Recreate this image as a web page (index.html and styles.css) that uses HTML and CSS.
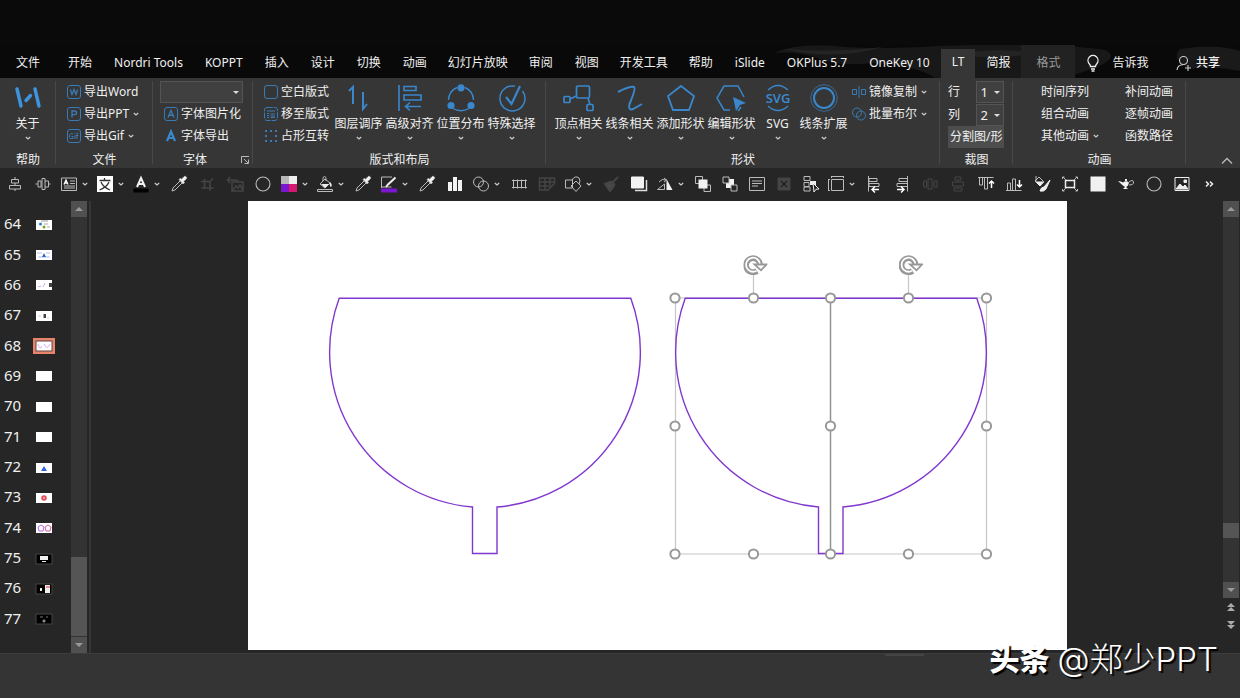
FILE: index.html
```html
<!DOCTYPE html>
<html lang="zh-CN">
<head>
<meta charset="utf-8">
<title>LT</title>
<link rel="stylesheet" href="styles.css">
</head>
<body>
<svg class="defs" aria-hidden="true">
  <symbol id="chev" viewBox="0 0 8 8"><path d="M1.8 3l2.200 2 2.200-2" fill="none" stroke="currentColor" stroke-width="1.200"/></symbol>
  <symbol id="dropper" viewBox="0 0 18 18"><path d="M10 6L3 13l-1 3 3-1 7-7" fill="none" stroke="currentColor"/><path d="M9 4.500l1.500-1 1 .8 2.500-2.600q1.500-1 2.300.3.700 1.200-.4 2.300L13.500 6.500l1 1-1.300 1.500z" fill="#f4f4f4"/></symbol>
  <symbol id="ring" viewBox="0 0 18 18"><circle cx="9" cy="9" r="7" fill="none" stroke="currentColor" stroke-width="1.100"/></symbol>
  <symbol id="rotate" viewBox="0 0 24 20"><path d="M16.500 9.500A7 7 0 1 0 13.500 16" fill="none" stroke="#989898" stroke-width="5.800"/><path d="M16.500 9.500A7 7 0 1 0 13 15.800" fill="none" stroke="#fff" stroke-width="1.800"/><path d="M11 9.500h12l-5.500 5.800z" fill="#fff" stroke="#989898" stroke-width="1.800"/></symbol>
</svg>

<div class="app">
  <header class="titlebar"></header>

  <nav class="tabs">
    <svg class="swirl" viewBox="0 0 465 33" preserveAspectRatio="none" aria-hidden="true">
      <path d="M0 8Q20 -2 60 1Q100 5 160 1Q280 -3 330 5Q345 12 322 22Q300 30 290 33H160Q140 20 100 18Q60 22 40 12Q20 6 0 8z" fill="#181818"/>
      <path d="M8 4Q60 8 108 2Q60 16 8 4zM175 9Q230 2 260 8Q220 16 175 9z" fill="#242424"/>
      <path d="M405 4Q440 -2 465 6V26Q440 20 415 24Q395 14 405 4z" fill="#1a1a1a"/>
    </svg>
    <button class="tab tab-file">文件</button>
    <button class="tab">开始</button>
    <button class="tab">Nordri Tools</button>
    <button class="tab">KOPPT</button>
    <button class="tab">插入</button>
    <button class="tab">设计</button>
    <button class="tab">切换</button>
    <button class="tab">动画</button>
    <button class="tab tight">幻灯片放映</button>
    <button class="tab">审阅</button>
    <button class="tab">视图</button>
    <button class="tab tight">开发工具</button>
    <button class="tab">帮助</button>
    <button class="tab">iSlide</button>
    <button class="tab">OKPlus 5.7</button>
    <button class="tab">OneKey 10</button>
    <button class="tab active">LT</button>
    <button class="tab">简报</button>
    <button class="tab context">格式</button>
    <button class="tab tell"><svg class="i18" viewBox="0 0 18 18"><path d="M6.500 12.500Q6.500 11 5 9.500A5 5 0 1 1 13 9.500Q11.500 11 11.500 12.500zM7 15h4M7.500 17h3" fill="none" stroke="#f0f0f0" stroke-width="1.300"/></svg>告诉我</button>
    <button class="tab share"><svg class="i18" viewBox="0 0 18 18"><circle cx="8.500" cy="6.500" r="4" fill="none" stroke="#ccc" stroke-width="1.100"/><path d="M2 16Q2.500 11 8 10.800M10 14h6M13 11v6" fill="none" stroke="#ccc" stroke-width="1.100"/></svg>共享</button>
  </nav>

  <section class="ribbon">
    <div class="group g-help">
      <div class="body">
        <button class="big"><svg viewBox="0 0 28 28"><path d="M3 5l4 17M21 5l4 17M12 16.500l4.500-5" fill="none" stroke="#3f94e0" stroke-width="3.400" stroke-linecap="round"/></svg><span>关于</span><svg class="chev"><use href="#chev"/></svg></button>
      </div>
      <h2 class="caption">帮助</h2>
    </div>

    <div class="group g-file">
      <div class="body"><div class="col">
        <button class="small"><svg class="ic" viewBox="0 0 14 14"><rect x=".5" y=".5" width="13" height="13" rx="2.500"/><path d="M3.500 4.500l1.500 5 2-5 2 5 1.500-5" stroke-width="1.300"/></svg>导出Word</button>
        <button class="small"><svg class="ic" viewBox="0 0 14 14"><rect x=".5" y=".5" width="13" height="13" rx="2.500"/><path d="M5 10.500V4h2.500q2 0 2 1.800t-2 1.800H5" stroke-width="1.400"/></svg>导出PPT<svg class="chev"><use href="#chev"/></svg></button>
        <button class="small"><svg class="ic" viewBox="0 0 14 14"><rect x=".5" y=".5" width="13" height="13" rx="2.500"/><path d="M6 5Q3 3.500 2.500 7T6 9.500V7.500H4.500M8 6v4M8 3.800v1M10 10V5q0-1.200 1.500-1M9 6.500h2.500"/></svg>导出Gif<svg class="chev"><use href="#chev"/></svg></button>
      </div></div>
      <h2 class="caption">文件</h2>
    </div>

    <div class="group g-font">
      <div class="body"><div class="col">
        <span class="combo font-combo"><select aria-label="字体"><option></option></select></span>
        <button class="small"><svg class="ic" viewBox="0 0 14 14"><rect x=".5" y=".5" width="13" height="13" rx="2.500"/><path d="M4 10.500L7 3.500l3 7M5 8.300h4" stroke-width="1.400"/></svg>字体图片化</button>
        <button class="small"><svg class="ic" viewBox="0 0 14 14"><path d="M3 12L7 2.500 11 12M4.500 9h5" stroke="#3a87cc" stroke-width="2.200"/></svg>字体导出</button>
      </div></div>
      <h2 class="caption">字体</h2>
      <button class="launch" aria-label="字体设置"><svg viewBox="0 0 9 9"><path d="M.5 7V.5H8M3 3l4 4M7.500 3.500v4h-4" fill="none" stroke="#bbb"/></svg></button>
    </div>

    <div class="group g-layout">
      <div class="body">
        <div class="col">
          <button class="small"><svg class="ic" viewBox="0 0 14 14"><rect x=".5" y=".5" width="13" height="13" rx="2.500"/></svg>空白版式</button>
          <button class="small"><svg class="ic" viewBox="0 0 14 14"><rect x=".5" y=".5" width="13" height="13" rx="2.500" stroke-dasharray="6 1"/><path d="M3 4h8M3 6.500h2M3 8.500h2M3 10.500h2M6.500 7H11M6.500 9H11M6.500 10.500H11"/></svg>移至版式</button>
          <button class="small"><svg class="ic" viewBox="0 0 14 14"><path d="M1 2h12M1 12h12" stroke-width="2" stroke-dasharray="2 3"/><path d="M2 6v2M12 6v2" stroke-width="2"/></svg>占形互转</button>
        </div>
        <button class="big"><svg viewBox="0 0 28 28"><path d="M4 7l4-4v17M18 8v17l4-5" fill="none" stroke="#3a87cc" stroke-width="2"/></svg><span>图层调序</span><svg class="chev"><use href="#chev"/></svg></button>
        <button class="big"><svg viewBox="0 0 28 28"><path d="M3 1v26M8 2.500h12v4H8zM8 11h17v5H8zM25 22.500H10M14 18.500l-4.500 4 4.500 4" fill="none" stroke="#3a87cc" stroke-width="1.600"/></svg><span>高级对齐</span><svg class="chev"><use href="#chev"/></svg></button>
        <button class="big"><svg viewBox="0 0 28 28"><path d="M18 3.500Q26 7 26.500 16M10 3.500Q2 7 1.500 16M6 24.500Q14 29 22 24.500" fill="none" stroke="#3a87cc" stroke-width="1.400"/><g fill="#3a87cc"><circle cx="14" cy="3.800" r="3.600"/><circle cx="4" cy="21.500" r="3.600"/><circle cx="24" cy="21.500" r="3.600"/></g></svg><span>位置分布</span><svg class="chev"><use href="#chev"/></svg></button>
        <button class="big"><svg viewBox="0 0 28 28"><path d="M17 2.200A12.500 12.500 0 1 0 24.500 7" fill="none" stroke="#3a87cc" stroke-width="1.500"/><path d="M8 13l5.500 7L22 2" fill="none" stroke="#3a87cc" stroke-width="2.200"/></svg><span>特殊选择</span><svg class="chev"><use href="#chev"/></svg></button>
      </div>
      <h2 class="caption">版式和布局</h2>
    </div>

    <div class="group g-shape">
      <div class="body">
        <button class="big"><svg class="wide" viewBox="0 0 32 28"><g fill="none" stroke="#3a87cc" stroke-width="1.700"><rect x="13.500" y="2" width="13" height="12" rx="1.500"/><rect x="1" y="12.500" width="6" height="6" rx="1"/><rect x="24" y="20.500" width="6" height="6" rx="1"/><path d="M7 15l6.500-3M25 14l2 6.500"/></g></svg><span>顶点相关</span><svg class="chev"><use href="#chev"/></svg></button>
        <button class="big"><svg viewBox="0 0 28 28"><path d="M2 8Q14 2 18 3Q20 5 13.500 20Q12 27 17 25L26 20" fill="none" stroke="#3a87cc" stroke-width="2"/></svg><span>线条相关</span><svg class="chev"><use href="#chev"/></svg></button>
        <button class="big"><svg viewBox="0 0 28 28"><path d="M14 2L27 12 22 26H6L1 12z" fill="none" stroke="#3a87cc" stroke-width="1.800"/></svg><span>添加形状</span><svg class="chev"><use href="#chev"/></svg></button>
        <button class="big"><svg class="wide" viewBox="0 0 32 28"><path d="M14 26H8L1 14 8 2h14l6 11M22 27l3-4" fill="none" stroke="#3a87cc" stroke-width="1.500"/><path d="M17 13l13 6-6 2-4 6z" fill="#3a87cc"/></svg><span>编辑形状</span><svg class="chev"><use href="#chev"/></svg></button>
        <button class="big narrow"><svg viewBox="0 0 28 28"><path d="M4 6Q14 -3 24 6M4 22Q14 31 24 22" fill="none" stroke="#3a87cc" stroke-width="1.400"/><text x="14" y="18.500" text-anchor="middle" class="svgtext">SVG</text></svg><span>SVG</span><svg class="chev"><use href="#chev"/></svg></button>
        <button class="big"><svg viewBox="0 0 28 28"><circle cx="14" cy="14" r="13.300" fill="none" stroke="#3a6a96"/><circle cx="14" cy="14" r="10" fill="none" stroke="#3a87cc" stroke-width="2"/></svg><span>线条扩展</span><svg class="chev"><use href="#chev"/></svg></button>
        <div class="col">
          <button class="small"><svg class="ic" viewBox="0 0 14 14"><path d="M.5 4.500h4v5h-4zM9.500 4.500h4v5h-4zM7 1v12"/></svg>镜像复制<svg class="chev"><use href="#chev"/></svg></button>
          <button class="small"><svg class="ic" viewBox="0 0 14 14"><circle cx="5" cy="5.500" r="4.500"/><circle cx="9" cy="8.500" r="4.500"/></svg>批量布尔<svg class="chev"><use href="#chev"/></svg></button>
        </div>
      </div>
      <h2 class="caption">形状</h2>
    </div>

    <div class="group g-crop">
      <div class="body"><div class="col">
        <div class="field"><label for="rows">行</label><span class="combo"><select id="rows"><option>1</option></select></span></div>
        <div class="field"><label for="cols">列</label><span class="combo"><select id="cols"><option>2</option></select></span></div>
        <button class="split">分割图/形</button>
      </div></div>
      <h2 class="caption">裁图</h2>
    </div>

    <div class="group g-anim">
      <div class="body">
        <div class="col">
          <button class="small">时间序列</button>
          <button class="small">组合动画</button>
          <button class="small">其他动画<svg class="chev"><use href="#chev"/></svg></button>
        </div>
        <div class="col">
          <button class="small">补间动画</button>
          <button class="small">逐帧动画</button>
          <button class="small">函数路径</button>
        </div>
      </div>
      <h2 class="caption">动画</h2>
    </div>
    <button class="collapse" aria-label="折叠功能区"><svg viewBox="0 0 12 8"><path d="M1 6.500l5-5 5 5" fill="none" stroke="#bbb" stroke-width="1.300"/></svg></button>
  </section>

  <section class="quick">
    <button class="q" aria-label="水平居中"><svg viewBox="0 0 18 18"><path d="M9 2v2M9 8v2M9 14v2M5.500 4.500h7v3.500h-7zM3.500 10.500h11v3.500h-11z"/></svg></button>
    <button class="q" aria-label="垂直居中"><svg viewBox="0 0 18 18"><path d="M1.500 9h2M14.500 9h2M4 6h3v6H4zM8 3.500h3v11H8zM11 6h3.500v6H11"/></svg></button>
    <button class="q s" aria-label="文本框"><svg viewBox="0 0 18 18"><path d="M1.500 3h15v12.500h-15zM10 6h5M10 8.500h5M4 11h11M4 13h11"/><path d="M4 9.500l2-4.500 2 4.500M5 8h2" stroke="#fff" stroke-width="1.300"/></svg><svg class="chev"><use href="#chev"/></svg></button>
    <button class="q s" aria-label="文字"><svg viewBox="0 0 18 18"><rect x="1.500" y="1.500" width="15" height="15" fill="#fff" stroke="#fff"/><path d="M8.500 3v2.500M3.500 5.500h11M5 7q2 5 9 8M13 7q-2 5-9.500 8" stroke="#333" stroke-width="1.300"/></svg><svg class="chev"><use href="#chev"/></svg></button>
    <button class="q s" aria-label="字体颜色"><svg viewBox="0 0 18 18"><path d="M5 12L9 3l4 9M6.500 9h5" stroke="#f2f2f2" stroke-width="2"/><path d="M1.500 15.500h15" stroke="#000" stroke-width="4"/></svg><svg class="chev"><use href="#chev"/></svg></button>
    <button class="q" aria-label="取色器"><svg><use href="#dropper"/></svg></button>
    <button class="q dim" aria-label="裁剪"><svg viewBox="0 0 18 18"><path d="M6.500 4v9h9M3 6.500h9V16M12 6.500l3-3M6.500 13l-3 0" stroke-width="1.600"/></svg></button>
    <button class="q dim" aria-label="重设图片"><svg viewBox="0 0 18 18"><path d="M6 7h11v9H6zM7 15l3-4 2 2 2-3 3 5M2 5h7q3 0 3 2M4 2L1.500 5 4 8" stroke-width="1.500"/></svg></button>
    <button class="q" aria-label="圆"><svg><use href="#ring"/></svg></button>
    <button class="q s" aria-label="配色"><svg viewBox="0 0 18 18"><path d="M1 1h8v8H1z" fill="#b8b8b8" stroke="none"/><path d="M9 1h8v8H9z" fill="#ededed" stroke="none"/><path d="M1 9h8v8H1z" fill="#7a17cf" stroke="none"/><path d="M9 9h8v8H9z" fill="#d6186f" stroke="none"/></svg><svg class="chev"><use href="#chev"/></svg></button>
    <button class="q s" aria-label="填充"><svg viewBox="0 0 18 18"><path d="M1.500 14.500h15v2h-15zM4 9l5-5 5 4-5 5zM7 6V2.500q1.500-2 3 0V6"/><path d="M5 9h8l-4 4zM14 7q3 3 1 5-2-1-1-5z" fill="#eee" stroke="none"/></svg><svg class="chev"><use href="#chev"/></svg></button>
    <button class="q" aria-label="填充取色"><svg><use href="#dropper"/></svg></button>
    <button class="q s" aria-label="轮廓"><svg viewBox="0 0 18 18"><path d="M12 2H1.500v11M1.500 12h10"/><path d="M15.500 2.500L8 9.500l-2 2.500" stroke="#eee" stroke-width="2"/><path d="M1 15.500h16" stroke="#7a17cf" stroke-width="4"/></svg><svg class="chev"><use href="#chev"/></svg></button>
    <button class="q" aria-label="轮廓取色"><svg><use href="#dropper"/></svg></button>
    <button class="q" aria-label="图表"><svg viewBox="0 0 18 18"><path d="M2 7h4v9H2zM7 2h4v14H7zM12 5h4v11h-4z" fill="#f2f2f2" stroke="none"/></svg></button>
    <button class="q s" aria-label="合并形状"><svg viewBox="0 0 18 18"><circle cx="6.500" cy="7" r="5"/><circle cx="11.500" cy="11" r="5"/></svg><svg class="chev"><use href="#chev"/></svg></button>
    <button class="q" aria-label="分布"><svg viewBox="0 0 18 18"><path d="M3.500 4.500v9M7.500 4.500v9M11.500 4.500v9M15.500 4.500v9M2 5.500h15M2 12.500h15"/></svg></button>
    <button class="q dim" aria-label="表格"><svg viewBox="0 0 18 18"><path d="M1.500 3h15v4h-15zM1.500 7v8h8M1.500 11h12M7 3v12M12 3v7M9 16l8-8" stroke-width="1.500"/></svg></button>
    <button class="q s" aria-label="形状"><svg viewBox="0 0 18 18"><path d="M1.500 5h7v8h-7zM12 6l5 5-5 5.500L7 11zM8 5q3-5 7-2 2 3 0 6"/></svg><svg class="chev"><use href="#chev"/></svg></button>
    <button class="q dim" aria-label="格式刷"><svg viewBox="0 0 18 18"><path d="M16 2l-5 5M9 6l4 4M3 9l5-2 4 4-4 5z" fill="#484848" stroke-width="2"/></svg></button>
    <button class="q" aria-label="图层"><svg viewBox="0 0 18 18"><path d="M5 15.500h11.500V5" stroke="#ddd" stroke-width="1.500"/><path d="M1.500 2h12v11h-12z" fill="#f2f2f2" stroke="#f2f2f2"/></svg></button>
    <button class="q s" aria-label="旋转"><svg viewBox="0 0 18 18"><path d="M1.500 14.500h7V9zM3 7q3-4 7-2M8 3l2.500 2L8 7"/><path d="M10.500 15V4l6 11z" fill="#f2f2f2" stroke="none"/></svg><svg class="chev"><use href="#chev"/></svg></button>
    <span class="cluster">
    <button class="q" aria-label="上移一层"><svg viewBox="0 0 18 18"><path d="M1.500 1.500h7v7h-7zM10 10h6.500v6.500H10z"/><path d="M4.500 4.500h9v9h-9z" fill="#f2f2f2" stroke="none"/></svg></button>
    <button class="q" aria-label="下移一层"><svg viewBox="0 0 18 18"><path d="M5 4h8v9H5z" fill="#f2f2f2" stroke="none"/><path d="M2 2h6v6H2zM10 10h6v6h-6z" fill="#262626"/></svg></button>
    <button class="q" aria-label="备注"><svg viewBox="0 0 18 18"><path d="M1.500 2.500h15v13h-15zM4 6h10M4 8.500h10M4 11h6" /></svg></button>
    <button class="q dim" aria-label="删除"><svg viewBox="0 0 18 18"><path d="M3 3h12v12H3z" fill="#444"/><path d="M6 6l6 6M12 6l-6 6" stroke="#222" stroke-width="1.500"/></svg></button>
    <button class="q" aria-label="选择对象"><svg viewBox="0 0 18 18"><path d="M2 1.500h6v4H2zM2 7.500h5v4H2zM2 12v4h6v-4z"/><path d="M8 6h6v4H8z" fill="#eee" stroke="none"/><path d="M11 8l6 6-3 .3-2 2.700z" fill="#262626" stroke="#eee"/></svg></button>
    <button class="q s" aria-label="尺寸"><svg viewBox="0 0 18 18"><path d="M4.500 4.500h12v11h-12zM4 1.500h13M1.500 4v12M4.500 1v2M16.500 1v2M1 4.500h2M1 15.500h2"/></svg><svg class="chev"><use href="#chev"/></svg></button>
    </span>
    <button class="q" aria-label="左对齐"><svg viewBox="0 0 18 18"><path d="M3.500 1v15.500M4 3.500h8v3H4zM4 8.500h10v3H4z"/><path d="M14 14.500H7M10 11.500l-3 3 3 3" stroke="#fff" stroke-width="1.500"/></svg></button>
    <button class="q" aria-label="右对齐"><svg viewBox="0 0 18 18"><path d="M14.500 1v15.500M14 3.500H6v3h8M14 8.500H4v3h10"/><path d="M4 14.500h7M8 11.500l3 3-3 3" stroke="#fff" stroke-width="1.500"/></svg></button>
    <button class="q dim" aria-label="横向分布"><svg viewBox="0 0 18 18"><path d="M2.500 6h3v6h-3zM7 4h4v10H7zM13 6h3v6h-3z"/></svg></button>
    <button class="q dim" aria-label="纵向分布"><svg viewBox="0 0 18 18"><path d="M6 2h6v3H6zM3.500 7h11v4h-11zM5 13h8v3H5zM9 5v2M9 11v2"/></svg></button>
    <button class="q" aria-label="顶端对齐"><svg viewBox="0 0 18 18"><path d="M1 2.500h15.500M2.500 3v7h3V3M7.500 3v11h3V3"/><path d="M14.500 13V6M12 8.500L14.500 6 17 8.500" stroke="#fff" stroke-width="1.500"/></svg></button>
    <button class="q" aria-label="底端对齐"><svg viewBox="0 0 18 18"><path d="M1 15.500h15.500M2.500 15V8h3v7M7.500 15V4h3v11"/><path d="M14.500 5v7M12 9.500l2.500 2.500L17 9.500" stroke="#fff" stroke-width="1.500"/></svg></button>
    <button class="q" aria-label="样式刷"><svg viewBox="0 0 18 18"><path d="M2 6l4-4 5 5-4 4zM3 1v5"/><path d="M3 7h7l-3 4zM17 5l-6 7q-3 0-4 4 4 1 6-2z" fill="#eee" stroke="#eee"/></svg></button>
    <button class="q" aria-label="适应"><svg viewBox="0 0 18 18"><path d="M4.500 5.500h9v7h-9z" stroke="#eee" stroke-width="1.500"/><path d="M2 2l3 3M16 2l-3 3M2 16l3-3M16 16l-3-3M1.500 4V2h2M14.500 2h2v2M1.500 14v2h2M14.500 16h2v-2"/></svg></button>
    <button class="q" aria-label="矩形"><svg viewBox="0 0 18 18"><path d="M1.500 1.500h15v15h-15z" fill="#f0f0f0" stroke="none"/></svg></button>
    <button class="q" aria-label="神灯"><svg viewBox="0 0 18 18"><path d="M1 6q3 0 5 1.500Q9 5 12 7.500q-1 4-3 4.500l2 2H6l2-2Q5 10 1 6zM8 4h2v2H8z" fill="#f2f2f2" stroke="none"/><path d="M12 7q4-3 4.500 0T12 10"/></svg></button>
    <button class="q" aria-label="椭圆"><svg><use href="#ring"/></svg></button>
    <button class="q" aria-label="图片"><svg viewBox="0 0 18 18"><path d="M2 2.500h14v13H2z" stroke="#eee"/><path d="M3 14l4-5 3 3 2-2 3 4zM11 5h2.500v2.500H11z" fill="#eee" stroke="#eee"/></svg></button>
    <button class="q" aria-label="更多"><svg viewBox="0 0 18 18"><path d="M5 6.500L7.500 9 5 11.500M9 6.500l2.500 2.500L9 11.500" stroke="#eee" stroke-width="1.500"/></svg></button>
  </section>

  <main class="workspace">
    <ol class="thumbs">
      <li>64<svg viewBox="0 0 16 10"><rect width="16" height="10" fill="#fff"/><path d="M5 1h7" stroke="#999"/><circle cx="4.500" cy="4" r="1.500" fill="#2b82c9"/><circle cx="8" cy="7" r="1.500" fill="#76a52c"/><path d="M8 4h4M11 7h3" stroke="#aaa"/></svg></li>
      <li>65<svg viewBox="0 0 16 10"><rect width="16" height="10" fill="#fff"/><path d="M1 3h5M10 3h4M2 7h12" stroke="#aac0f5"/><path d="M8 3l2 4H6z" fill="#3465c8"/></svg></li>
      <li>66<svg viewBox="0 0 16 10"><rect width="16" height="10" fill="#fff"/><path d="M2 7l3-1M7 7l2-4" stroke="#c8aee8"/><path d="M13 3h3v4h-3z" fill="#444"/></svg></li>
      <li>67<svg viewBox="0 0 16 10"><rect width="16" height="10" fill="#fff"/><path d="M2 5h3M11 7h2" stroke="#d8c8e8"/><path d="M7.500 3h2.500v4H7.500z" fill="#444"/></svg></li>
      <li class="current">68<svg viewBox="0 0 16 10"><rect width="16" height="10" fill="#fff" stroke="#5c4742"/><path d="M2 3q2 7 4 2M8 3q3 7 6 0" fill="none" stroke="#d5b0ed"/></svg></li>
      <li>69<svg viewBox="0 0 16 10"><rect width="16" height="10" fill="#fff"/></svg></li>
      <li>70<svg viewBox="0 0 16 10"><rect width="16" height="10" fill="#fff"/></svg></li>
      <li>71<svg viewBox="0 0 16 10"><rect width="16" height="10" fill="#fff"/></svg></li>
      <li>72<svg viewBox="0 0 16 10"><rect width="16" height="10" fill="#fff"/><path d="M8 3l3 5H5z" fill="#3465d8"/></svg></li>
      <li>73<svg viewBox="0 0 16 10"><rect width="16" height="10" fill="#fff"/><circle cx="8" cy="5" r="2" fill="#f5a0a0" stroke="#e84450" stroke-width="1.500"/></svg></li>
      <li>74<svg viewBox="0 0 16 10"><rect width="16" height="10" fill="#fff"/><path d="M5 2l3 2-1 4H3L2 4z" fill="none" stroke="#a86be8"/><path d="M12 2l3 2-1 4h-4L9 4z" fill="none" stroke="#e0559a"/></svg></li>
      <li>75<svg viewBox="0 0 16 10"><rect width="16" height="10" fill="#000" stroke="#444"/><path d="M4 2h8v4H4zM6 7h4v1H6z" fill="#eee"/></svg></li>
      <li>76<svg viewBox="0 0 16 10"><rect width="16" height="10" fill="#000" stroke="#444"/><path d="M4 4h2v3H4zM9 1h5v8H9z" fill="#eee"/><path d="M10 3h4" stroke="#d33"/></svg></li>
      <li>77<svg viewBox="0 0 16 10"><rect width="16" height="10" fill="#000" stroke="#444"/><path d="M4 3h3M10 3h2M7 6h2v2H7z" fill="#bbb" stroke="#777"/></svg></li>
    </ol>
    <div class="scroll scroll-left" aria-hidden="true">
      <span class="arrow up"></span><span class="track"></span><span class="thumb"></span><span class="arrow down"></span>
    </div>
    <div class="stage">
      <svg class="slide" viewBox="248 201 819 449">
        <rect x="248" y="201" width="819" height="449" fill="#fff"/>
        <g fill="none" stroke="#c6c6c6" stroke-width="1.200"><path d="M675.500 298H986.500V554H675.500zM753.500 275v18M908.500 275v18"/></g>
        <g fill="none" stroke="#8137cf" stroke-width="1.400">
          <path d="M339.200 298.300H630.800A155.500 155.500 0 0 1 497 507V553.500H472.500V507A155.500 155.500 0 0 1 339.200 298.300z"/>
          <path d="M685.200 298.300H976.800A155.500 155.500 0 0 1 843 507V553.500H818.500V507A155.500 155.500 0 0 1 685.200 298.300z"/>
        </g>
        <path d="M830.500 298V554" stroke="#929292" stroke-width="1.500"/>
        <g fill="#fff" stroke="#989898" stroke-width="2">
          <circle cx="675" cy="298" r="4.600"/><circle cx="753.500" cy="298" r="4.600"/><circle cx="830.500" cy="298" r="4.600"/><circle cx="908.500" cy="298" r="4.600"/><circle cx="986.500" cy="298" r="4.600"/>
          <circle cx="675" cy="426" r="4.600"/><circle cx="830.500" cy="426" r="4.600"/><circle cx="986.500" cy="426" r="4.600"/>
          <circle cx="675" cy="554" r="4.600"/><circle cx="753.500" cy="554" r="4.600"/><circle cx="830.500" cy="554" r="4.600"/><circle cx="908.500" cy="554" r="4.600"/><circle cx="986.500" cy="554" r="4.600"/>
        </g>
        <use href="#rotate" x="743.500" y="255" width="24" height="20"/>
        <use href="#rotate" x="899" y="255" width="24" height="20"/>
      </svg>
    </div>
    <div class="scroll scroll-right" aria-hidden="true">
      <span class="arrow up"></span><span class="track"></span><span class="thumb"></span><span class="track-end"></span><span class="arrow down"></span>
      <svg class="pager" viewBox="0 0 16 40"><path d="M8 5l4 4H4zM8 9l4 4H4zM4 23h8l-4 4zM4 27h8l-4 4z" fill="#aaa"/></svg>
    </div>
  </main>

  <footer class="status"><span class="grip"></span></footer>
  <p class="watermark"><b>头条</b><span>@郑少PPT</span></p>
</div>
</body>
</html>
```

FILE: styles.css
```css
* { box-sizing: border-box; }

body {
  margin: 0;
  background: #343434;
  color: #f0f0f0;
  font: 12px/16px "Noto Sans", "Noto Sans CJK SC", sans-serif;
}

button, select {
  font: inherit;
  color: inherit;
  background: none;
  border: 0;
  border-radius: 0;
  margin: 0;
  padding: 0;
  white-space: nowrap;
}

.defs { position: absolute; width: 0; height: 0; }
.app { position: relative; display: flex; flex-direction: column; min-height: 100vh; }
.titlebar { height: 45px; background: #0a0a0a; }

/* tab strip */
.tabs { position: relative; display: flex; height: 33px; background: #090909; }
.swirl { position: absolute; right: 0; top: 0; width: 465px; height: 33px; }
.tab { position: relative; padding: 2px 11px 0; }
.tab.tight { padding: 2px 10px 0; }
.tab-file { padding: 2px 17px 0 16px; }
.tab.active { background: #363636; margin-top: 4px; padding-bottom: 3px; padding-top: 0; }
.tab.context { background: #222; color: #999; padding: 2px 15px 0; }
.tab.tell, .tab.share { display: flex; align-items: center; }
.tab.tell { gap: 10px; padding: 2px 9px 0; }
.tab.share { gap: 3px; margin-left: auto; padding-right: 20px; font-weight: 500; }
.i18 { width: 18px; height: 18px; }

/* ribbon */
.ribbon { position: relative; display: flex; height: 90px; background: #363636; padding: 2px 0 0; }
.group { position: relative; flex: none; display: flex; flex-direction: column; }
.group::after { content: ""; position: absolute; right: 0; top: 1px; bottom: 4px; width: 1px; background: #484848; }
.body { display: flex; flex: 1; padding-top: 1px; }
.caption { margin: 0; height: 18px; font: inherit; line-height: 20px; text-align: center; }
.col { display: flex; flex-direction: column; }
.g-help { width: 56px; }
.g-help .body { padding-left: 2px; }
.g-file { width: 97px; }
.g-file .body { padding-left: 11px; }
.g-font { width: 100px; }
.g-font .body { padding-left: 7px; }
.g-font .caption { padding-right: 16px; }
.g-font .small { padding-left: 4px; }
.g-layout { width: 293px; }
.g-layout .body { padding-left: 11px; }
.g-layout .col { width: 69px; }
.g-shape { width: 394px; }
.g-shape .body { padding-left: 7px; }
.g-shape .col { padding-left: 3px; }
.g-crop { width: 73px; }
.g-crop .body { padding: 0 0 0 8px; }
.g-anim { width: 173px; }
.g-anim .body { padding-left: 28px; gap: 24px; }
.g-anim .col { min-width: 60px; }

.small { display: flex; align-items: center; gap: 3px; height: 22px; text-align: left; }
.ic { width: 14px; height: 14px; fill: none; stroke: #3a7ab5; }
.chev { width: 8px; height: 8px; color: #ccc; }
.big { display: flex; flex-direction: column; align-items: center; width: 51px; padding-top: 3px; }
.big > svg:first-child { width: 28px; height: 28px; }
.big > svg.wide { width: 32px; }
.big span { margin: 4px 0 2px; }
.narrow { width: 41px; }
.svgtext { font: 600 13px "Noto Sans", sans-serif; fill: #3a87cc; }

.combo { position: relative; display: block; width: 28px; height: 22px; }
.combo select { appearance: none; width: 100%; height: 100%; padding-left: 3px; background: #404040; border: 1px solid #545454; font-size: 13px; }
.combo::after { content: ""; position: absolute; right: 4px; top: 10px; border: 3px solid transparent; border-top-color: #ddd; border-bottom: 0; }
.font-combo { width: 83px; }
.field { display: flex; justify-content: space-between; align-items: center; height: 23px; }
.split { height: 22px; padding: 0 2px; background: #4d4d4d; }
.launch { position: absolute; right: 3px; bottom: 3px; width: 9px; height: 9px; }
.launch svg, .collapse svg { display: block; width: 100%; height: 100%; }
.collapse { position: absolute; right: 7px; bottom: 3px; width: 12px; height: 8px; }

/* quick access tools */
.quick { display: flex; height: 33px; padding: 0 1px 1px; background: #262626; color: #bbb; overflow: hidden; }
.cluster { display: flex; }
.q { flex: none; display: flex; align-items: center; width: 28px; padding: 0 5px; }
.q.s { width: 36px; padding: 0 0 0 3px; gap: 3px; }
.cluster .q { width: 27px; }
.cluster .q.s { width: 36px; }
.q svg { flex: none; width: 18px; height: 18px; fill: none; stroke: #bbb; }
.q svg.chev { width: 8px; height: 8px; }
.q.dim svg { stroke: #444; }

/* workspace */
.workspace { flex: 1; display: flex; background: #262626; }
.thumbs { display: grid; grid-auto-rows: 1fr; width: 71px; margin: 0; padding: 7px 0 20px 4px; list-style: none; font-size: 15px; }
.thumbs li { display: flex; align-items: center; gap: 12px; }
.thumbs svg { flex: none; width: 22px; height: 16px; padding: 3px; margin-top: 3px; overflow: visible; }
.current svg { background: #e8836c; }

.scroll { display: flex; flex-direction: column; width: 16px; background: #333; }
.scroll-left { margin-right: 2px; }
.arrow { display: flex; justify-content: center; align-items: center; height: 16px; background: #505050; }
.arrow::before { content: ""; border: 4px solid transparent; }
.arrow.up::before { border-top: 0; border-bottom-color: #999; }
.arrow.down::before { border-bottom: 0; border-top-color: #999; }
.track { flex: 1; }
.thumb { height: 80px; background: #555; border-bottom: 1px solid #333; }
.scroll-right .thumb { height: 16px; }
.scroll-right .track-end { height: 43px; }
.scroll-right { margin-right: 1px; }
.pager { height: 55px; width: 16px; background: #262626; padding-bottom: 15px; }

.stage { flex: 1; min-width: 0; padding: 0 156px 3px 157px; border-left: 2px solid #363636; }
.slide { display: block; width: 100%; height: auto; }

.status { height: 45px; background: #343434; border-top: 1px solid #3c3c3c; }
.grip { display: block; width: 39px; height: 2px; margin-left: 71.400%; background: #444; }

.watermark {
  position: absolute;
  right: 22px;
  bottom: 17px;
  display: flex;
  align-items: center;
  gap: 8px;
  margin: 0;
  color: #fff;
  font: 300 33px/44px Inter, "Noto Sans CJK SC", sans-serif;
  text-shadow: 2px 2px 1px #000;
}
.watermark b { font-size: 30px; font-weight: 900; }
```
